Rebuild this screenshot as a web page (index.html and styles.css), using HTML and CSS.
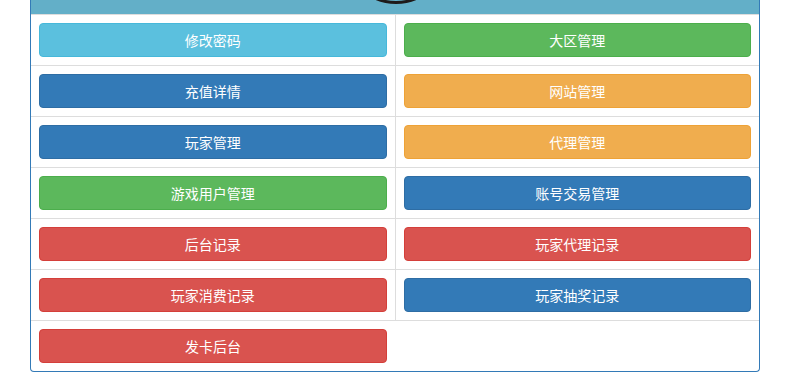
FILE: index.html
```html
<!DOCTYPE html>
<html lang="zh-CN">
<head>
    <meta charset="UTF-8">
    <meta name="viewport" content="width=device-width, initial-scale=1.0">
    <title>后台管理</title>
    <link rel="stylesheet" href="styles.css">
</head>
<body>
    <div class="wrap">
        <div class="panel">
            <div class="panel-heading">
                <div class="avatar"></div>
            </div>
            <table class="menu">
                <tr>
                    <td><a class="btn btn-info" href="#">修改密码</a></td>
                    <td><a class="btn btn-success" href="#">大区管理</a></td>
                </tr>
                <tr>
                    <td><a class="btn btn-primary" href="#">充值详情</a></td>
                    <td><a class="btn btn-warning" href="#">网站管理</a></td>
                </tr>
                <tr>
                    <td><a class="btn btn-primary" href="#">玩家管理</a></td>
                    <td><a class="btn btn-warning" href="#">代理管理</a></td>
                </tr>
                <tr>
                    <td><a class="btn btn-success" href="#">游戏用户管理</a></td>
                    <td><a class="btn btn-primary" href="#">账号交易管理</a></td>
                </tr>
                <tr>
                    <td><a class="btn btn-danger" href="#">后台记录</a></td>
                    <td><a class="btn btn-danger" href="#">玩家代理记录</a></td>
                </tr>
                <tr>
                    <td><a class="btn btn-danger" href="#">玩家消费记录</a></td>
                    <td><a class="btn btn-primary" href="#">玩家抽奖记录</a></td>
                </tr>
                <tr class="last">
                    <td><a class="btn btn-danger" href="#">发卡后台</a></td>
                    <td></td>
                </tr>
            </table>
        </div>
    </div>
</body>
</html>
```

FILE: styles.css
```css
body {
    margin: 0;
    background-color: #fff;
    font-family: "Noto Sans CJK SC", "Liberation Sans", sans-serif;
    font-size: 14px;
    color: #333;
}
.wrap {
    padding: 0 36px 0 30px;
}
.panel {
    width: 728px;
    border: 1px solid #337ab7;
    border-top: none;
    border-radius: 0 0 4px 4px;
    overflow: hidden;
}
.panel-heading {
    height: 14px;
    background-color: #63afc8;
    display: flex;
    justify-content: center;
    overflow: hidden;
}
.avatar {
    flex: none;
    width: 104px;
    height: 104px;
    margin-top: -100px;
    margin-left: 1px;
    border: 3px solid #1e1a1a;
    border-radius: 50%;
    box-sizing: border-box;
}
.menu {
    width: 100%;
    border-collapse: collapse;
    table-layout: fixed;
}
.menu td {
    padding: 8px;
    border-top: 1px solid #ddd;
    border-right: 1px solid #ddd;
}
.menu td:last-child,
.menu .last td {
    border-right: none;
}
.btn {
    display: block;
    padding: 6px 12px;
    font-size: 14px;
    line-height: 20px;
    text-align: center;
    color: #fff;
    text-decoration: none;
    border: 1px solid transparent;
    border-radius: 4px;
}
.btn-info {
    background-color: #5bc0de;
    border-color: #46b8da;
}
.btn-success {
    background-color: #5cb85c;
    border-color: #4cae4c;
}
.btn-primary {
    background-color: #337ab7;
    border-color: #2e6da4;
}
.btn-warning {
    background-color: #f0ad4e;
    border-color: #eea236;
}
.btn-danger {
    background-color: #d9534f;
    border-color: #d43f3a;
}
```
